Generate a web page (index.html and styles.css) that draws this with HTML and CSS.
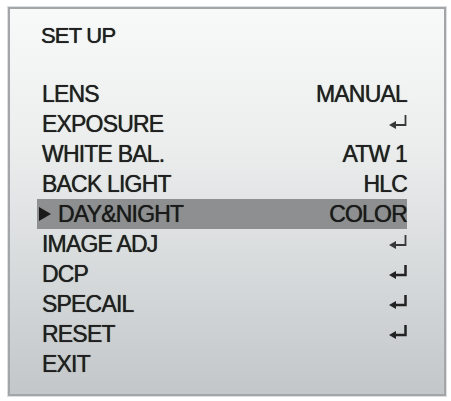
FILE: index.html
```html
<!DOCTYPE html>
<html>
<head>
<meta charset="utf-8">
<link rel="stylesheet" href="styles.css">
</head>
<body>
<div class="frame">
  <div class="title">SET UP</div>
  <div class="list">
    <div class="row"><span>LENS</span><span>MANUAL</span></div>
    <div class="row"><span>EXPOSURE</span><svg class="ret thin" viewBox="0 0 18 14"><path d="M16.5 0 V10 H5" /><polygon points="0,10 7,6 7,14" /></svg></div>
    <div class="row"><span>WHITE BAL.</span><span>ATW 1</span></div>
    <div class="row"><span>BACK LIGHT</span><span>HLC</span></div>
    <div class="row sel"><span class="lab"><svg class="tri" viewBox="0 0 12 14"><polygon points="0,0 12,7 0,14" /></svg>DAY&amp;NIGHT</span><span>COLOR</span></div>
    <div class="row"><span>IMAGE ADJ</span><svg class="ret thin" viewBox="0 0 18 14"><path d="M16.5 0 V10 H5" /><polygon points="0,10 7,6 7,14" /></svg></div>
    <div class="row"><span>DCP</span><svg class="ret" viewBox="0 0 18 14"><path d="M16.5 0 V10 H5" /><polygon points="0,10 7,6 7,14" /></svg></div>
    <div class="row"><span>SPECAIL</span><svg class="ret" viewBox="0 0 18 14"><path d="M16.5 0 V10 H5" /><polygon points="0,10 7,6 7,14" /></svg></div>
    <div class="row"><span>RESET</span><svg class="ret" viewBox="0 0 18 14"><path d="M16.5 0 V10 H5" /><polygon points="0,10 7,6 7,14" /></svg></div>
    <div class="row"><span>EXIT</span></div>
  </div>
</div>
</body>
</html>
```

FILE: styles.css
```css
html, body {
  margin: 0;
  padding: 0;
  background: #ffffff;
}
body {
  width: 451px;
  height: 401px;
  overflow: hidden;
  font-family: "Liberation Sans", Arial, sans-serif;
  color: #202020;
}
.frame {
  box-sizing: border-box;
  margin: 7px 0 0 8px;
  width: 438px;
  height: 389px;
  border: 2px solid #a3a6a8;
  box-shadow: 0 0 0 1px #dcdedf;
  background: linear-gradient(#f8f9f9 0%, #eceeee 35%, #d9dcdd 65%, #c4c7c9 100%);
  padding: 16px 37px 0 27px;
  display: flex;
  flex-direction: column;
}
.title {
  font-size: 22px;
  line-height: 22px;
  letter-spacing: -0.8px;
  padding-left: 4px;
  margin-bottom: 32px;
  text-shadow: 0 0 0.7px #202020;
}
.list {
  display: flex;
  flex-direction: column;
}
.row {
  display: flex;
  justify-content: space-between;
  align-items: flex-start;
  height: 30px;
  line-height: 30px;
  font-size: 23px;
  letter-spacing: -0.8px;
  padding-left: 5px;
  text-shadow: 0 0 0.7px #202020;
}
.row.sel {
  background: #8e8f90;
  padding-left: 2px;
  color: #1a1a1a;
}
.lab {
  display: flex;
  align-items: flex-start;
}
.tri {
  flex-shrink: 0;
  width: 12px;
  height: 14px;
  margin-top: 8px;
  margin-right: 7px;
  fill: #1a1a1a;
}
.ret {
  flex-shrink: 0;
  width: 18px;
  height: 14px;
  margin-top: 6px;
}
.ret path {
  fill: none;
  stroke: #222;
  stroke-width: 2.5;
}
.ret polygon {
  fill: #222;
}
.ret.thin path {
  stroke-width: 1.8;
  stroke: #383838;
}
.ret.thin polygon {
  fill: #383838;
}
```
